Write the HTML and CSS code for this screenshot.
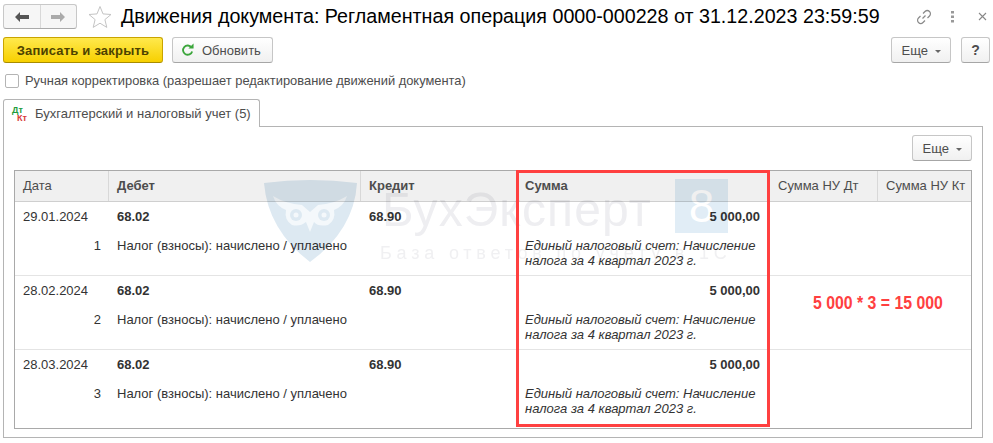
FILE: index.html
```html
<!DOCTYPE html>
<html lang="ru">

<head>
    <meta charset="UTF-8">
    <title>Движения документа</title>
    <link rel="stylesheet" href="styles.css">
</head>

<body>
    <div class="top">
        <div class="nav">
            <div class="nav-btn">
                <svg width="16" height="12" viewBox="0 0 16 12"><path d="M1 6l5-5v3h9v4H6v3z" fill="#555"/></svg>
            </div>
            <div class="nav-btn">
                <svg width="16" height="12" viewBox="0 0 16 12"><path d="M15 6l-5-5v3H1v4h9v3z" fill="#aaa"/></svg>
            </div>
        </div>
        <svg class="star" width="24" height="23" viewBox="0 0 24 23"><path d="M12 1.500l3 7.400 8 .6-6.100 5.100 1.900 7.800-6.800-4.200-6.800 4.200 1.900-7.800L1 9.500l8-.6z" fill="#fff" stroke="#c4c4c4"/></svg>
        <h1>Движения документа: Регламентная операция 0000-000228 от 31.12.2023 23:59:59</h1>
        <div class="win-icons">
            <svg width="16" height="16" viewBox="0 0 16 16"><path d="M6.500 9.500l3-3M7 4.500l2-2a3 3 0 0 1 4.500 4.500l-2 2M9 11.500l-2 2a3 3 0 0 1-4.500-4.500l2-2" fill="none" stroke="#8a8a8a" stroke-width="1.200"/></svg>
            <svg width="4" height="12" viewBox="0 0 4 12"><path d="M0 0h3v2.500H0zM0 4.500h3V7H0zM0 9h3v2.500H0z" fill="#999"/></svg>
            <svg class="close" width="9" height="9" viewBox="0 0 9 9"><path d="M1 1l7 7M8 1L1 8" stroke="#888" stroke-width="1.100"/></svg>
        </div>
    </div>

    <div class="actions">
        <button class="btn btn-main">Записать и закрыть</button>
        <button class="btn btn-refresh">
            <svg width="13" height="14" viewBox="0 0 14 14"><path d="M11.300 4.300A5 5 0 1 0 12 8.500" fill="none" stroke="#3ca63c" stroke-width="2"/><path d="M8 5.500h5.500V0z" fill="#3ca63c"/></svg>
            Обновить
        </button>
        <div class="actions-right">
            <button class="btn btn-more">Еще <i class="caret"></i></button>
            <button class="btn btn-help">?</button>
        </div>
    </div>

    <label class="check"><span class="box"></span>Ручная корректировка (разрешает редактирование движений документа)</label>

    <div class="tabs">
        <div class="tab">
            <span class="dtkt"><b class="dt">Дт</b><b class="kt">Кт</b></span>
            Бухгалтерский и налоговый учет (5)
        </div>
    </div>

    <div class="panel">
        <div class="panel-bar">
            <button class="btn btn-more">Еще <i class="caret"></i></button>
        </div>

        <div class="table">
            <div class="row head">
                <div class="cell">Дата</div>
                <div class="cell strong">Дебет</div>
                <div class="cell strong">Кредит</div>
                <div class="cell strong">Сумма</div>
                <div class="cell">Сумма НУ Дт</div>
                <div class="cell">Сумма НУ Кт</div>
            </div>

            <div class="row line">
                <div class="cell">
                    <div class="t1">29.01.2024</div>
                    <div class="t2 num">1</div>
                </div>
                <div class="cell">
                    <div class="t1 strong">68.02</div>
                    <div class="t2">Налог (взносы): начислено / уплачено</div>
                </div>
                <div class="cell"><div class="t1 strong">68.90</div></div>
                <div class="cell cell-sum">
                    <div class="t1 strong num">5 000,00</div>
                    <div class="t2 note">Единый налоговый счет: Начисление налога за 4 квартал 2023 г.</div>
                </div>
            </div>

            <div class="row line">
                <div class="cell">
                    <div class="t1">28.02.2024</div>
                    <div class="t2 num">2</div>
                </div>
                <div class="cell">
                    <div class="t1 strong">68.02</div>
                    <div class="t2">Налог (взносы): начислено / уплачено</div>
                </div>
                <div class="cell"><div class="t1 strong">68.90</div></div>
                <div class="cell cell-sum">
                    <div class="t1 strong num">5 000,00</div>
                    <div class="t2 note">Единый налоговый счет: Начисление налога за 4 квартал 2023 г.</div>
                </div>
            </div>

            <div class="row line last">
                <div class="cell">
                    <div class="t1">28.03.2024</div>
                    <div class="t2 num">3</div>
                </div>
                <div class="cell">
                    <div class="t1 strong">68.02</div>
                    <div class="t2">Налог (взносы): начислено / уплачено</div>
                </div>
                <div class="cell"><div class="t1 strong">68.90</div></div>
                <div class="cell cell-sum">
                    <div class="t1 strong num">5 000,00</div>
                    <div class="t2 note">Единый налоговый счет: Начисление налога за 4 квартал 2023 г.</div>
                </div>
            </div>

            <div class="watermark">
                <svg class="wm-shield" width="93" height="82" viewBox="0 0 93 82">
                    <path d="M0 3Q46 -3 93 3Q90 50 46 82Q4 50 0 3z" fill="#dde9f2"/>
                    <path d="M9 16Q22 24 38 25L46 32L54 25Q70 24 83 16Q80 26 70 30Q72 40 64 45Q54 47 50 42L46 52L42 42Q36 47 28 45Q20 40 22 30Q12 26 9 16z" fill="#f4f8fb"/>
                    <circle cx="32" cy="35" r="6" fill="#dde9f2"/>
                    <circle cx="60" cy="35" r="6" fill="#dde9f2"/>
                    <circle cx="32" cy="35" r="2.500" fill="#f4f8fb"/>
                    <circle cx="60" cy="35" r="2.500" fill="#f4f8fb"/>
                </svg>
                <div class="wm-name">БухЭксперт</div>
                <div class="wm-sub">База ответов по учету в 1С</div>
                <div class="wm-eight">8</div>
            </div>

            <div class="red-box"></div>
            <div class="red-text">5 000 * 3 = 15 000</div>
        </div>
    </div>
</body>

</html>
```

FILE: styles.css
```css
* {
    margin: 0;
    padding: 0;
    box-sizing: border-box;
}

body {
    width: 993px;
    height: 443px;
    overflow: hidden;
    background-color: #fff;
    font-family: "Liberation Sans", Arial, sans-serif;
    font-size: 13px;
    color: #333;
}

/* top line */
.top {
    display: flex;
    align-items: center;
    height: 30px;
    padding: 3px 0 0 3px;
}

.nav {
    display: flex;
    width: 74px;
    height: 25px;
    border: 1px solid #c8c8c8;
    border-bottom-color: #aaa;
    border-radius: 3px;
    background-color: #f6f6f6;
}

.nav-btn {
    flex: 1;
    display: flex;
    align-items: center;
    justify-content: center;
}

.nav-btn + .nav-btn {
    border-left: 1px solid #d8d8d8;
}

.star {
    margin: 0 9px 0 11px;
}

h1 {
    font-size: 19.700px;
    font-weight: normal;
    color: #000;
    white-space: nowrap;
}

.win-icons {
    display: flex;
    align-items: center;
    margin-left: auto;
    width: 77px;
    gap: 19px;
}

.close {
    margin-left: 4px;
}

/* buttons */
.btn {
    height: 26px;
    border: 1px solid #c6c6c6;
    border-bottom-color: #a6a6a6;
    border-radius: 3px;
    background: linear-gradient(#fff, #f0f0f0);
    font-family: inherit;
    font-size: 13px;
    color: #4d4d4d;
}

.actions {
    display: flex;
    padding: 7px 3px 0;
    gap: 9px;
}

.btn-main {
    width: 160px;
    border-color: #c9a400;
    border-bottom-color: #a88c00;
    background: linear-gradient(#ffe94d, #f7d000);
    font-weight: bold;
    letter-spacing: 0.2px;
    color: #4d4200;
}

.btn-refresh {
    display: flex;
    align-items: center;
    gap: 8px;
    width: 101px;
    padding-left: 8px;
}

.actions-right {
    display: flex;
    gap: 10px;
    margin-left: auto;
}

.btn-more {
    width: 60px;
}

.btn-help {
    width: 29px;
    font-size: 14px;
    font-weight: bold;
}

.caret {
    display: inline-block;
    margin-left: 3px;
    vertical-align: middle;
    border-style: solid;
    border-width: 3px 3px 0;
    border-color: #666 transparent transparent;
}

/* checkbox */
.check {
    display: flex;
    align-items: center;
    margin: 10px 0 0 5px;
    height: 15px;
    font-size: 12.900px;
    color: #4d4d4d;
}

.box {
    width: 14px;
    height: 14px;
    margin-right: 6px;
    border: 1px solid #b4b4b4;
    border-radius: 2px;
}

/* tab */
.tabs {
    display: flex;
    padding: 11px 0 0 3px;
    height: 39px;
}

.tab {
    position: relative;
    z-index: 1;
    display: flex;
    align-items: center;
    width: 257px;
    height: 28px;
    padding-left: 8px;
    border: 1px solid #b4b4b4;
    border-bottom: none;
    border-radius: 3px 3px 0 0;
    background-color: #fff;
    color: #4d4d4d;
}

.dtkt {
    display: block;
    width: 18px;
    height: 16px;
    margin-right: 5px;
    font-size: 9px;
    line-height: 8px;
}

.dtkt b {
    display: block;
}

.dt {
    color: #1d9c3c;
}

.kt {
    margin-left: 5px;
    color: #d83a3a;
}

/* panel */
.panel {
    margin: -1px 10px 0 3px;
    height: 312px;
    padding: 0 10px;
    border: 1px solid #b4b4b4;
}

.panel-bar {
    display: flex;
    justify-content: flex-end;
    height: 43px;
    padding-top: 8px;
}

.table {
    position: relative;
    width: 958px;
    height: 259px;
    border: 1px solid #a9a9a9;
}

.row {
    display: grid;
    grid-template-columns: 94px 252px 156px 253px 108px 1fr;
}

.head {
    height: 31px;
    border-bottom: 1px solid #cfcfcf;
    background-color: #f0f0f0;
    color: #4d4d4d;
}

.head .cell {
    line-height: 30px;
    border-right: 1px solid #d8d8d8;
}

.head .cell:last-child {
    border-right: none;
}

.line {
    height: 74px;
    border-bottom: 1px solid #e4e4e4;
}

.last {
    border-bottom: none;
}

.cell {
    padding: 0 8px;
    white-space: nowrap;
}

.cell-sum {
    padding-right: 10px;
}

.strong {
    font-weight: bold;
}

.t1 {
    height: 36px;
    padding-top: 8px;
    line-height: 14px;
}

.t2 {
    line-height: 15px;
}

.num {
    text-align: right;
}

.note {
    white-space: normal;
    font-style: italic;
}

/* watermark lies over the table and only darkens it */
.watermark {
    position: absolute;
    top: 8px;
    left: 249px;
    width: 464px;
    height: 90px;
    mix-blend-mode: multiply;
}

.wm-shield {
    position: absolute;
    top: 1px;
    left: 0;
}

.wm-name {
    position: absolute;
    top: 4px;
    left: 118px;
    font-size: 48px;
    line-height: 54px;
    letter-spacing: 1.100px;
    color: #eeeef1;
    white-space: nowrap;
}

.wm-sub {
    position: absolute;
    top: 64px;
    left: 116px;
    font-size: 18px;
    letter-spacing: 4.800px;
    color: #f0f0f2;
    white-space: nowrap;
}

.wm-eight {
    position: absolute;
    top: 0;
    left: 411px;
    width: 53px;
    height: 54px;
    background-color: #e1edf6;
    color: #fff;
    font-size: 46px;
    line-height: 54px;
    text-align: center;
}

/* marks over the table */
.red-box {
    position: absolute;
    top: -1px;
    left: 501px;
    width: 254px;
    height: 257px;
    border: 3px solid #ff4040;
}

.red-text {
    position: absolute;
    top: 122px;
    left: 798px;
    font-size: 18px;
    font-weight: bold;
    color: #ff4040;
    white-space: nowrap;
    transform: scaleX(0.88);
    transform-origin: left;
}
```
